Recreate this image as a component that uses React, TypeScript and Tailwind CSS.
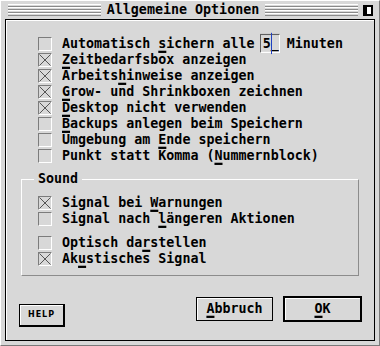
const font = { fontFamily: '"DejaVu Sans Mono", "Liberation Mono", monospace' };

const U = ({ children }: { children: string }) => (
  <span className="underline decoration-2 underline-offset-[2px]">{children}</span>
);

const Check = ({ on }: { on?: boolean }) => (
  <span className="w-[14px] h-[14px] shrink-0 border-t border-l border-[#7c7c7c] border-b border-r border-b-white border-r-white flex">
    {on && (
      <svg width="12" height="12" viewBox="0 0 12 12">
        <line x1="0.5" y1="0.5" x2="11.5" y2="11.5" stroke="#555" strokeWidth="1" />
        <line x1="11.5" y1="0.5" x2="0.5" y2="11.5" stroke="#555" strokeWidth="1" />
      </svg>
    )}
  </span>
);

const Row = ({ on, children }: { on?: boolean; children: React.ReactNode }) => (
  <div className="h-[16px] flex items-center gap-[10px]">
    <Check on={on} />
    <span className="whitespace-pre leading-[16px] inline-block scale-y-[1.12]">{children}</span>
  </div>
);

const Stripes = () => (
  <div className="flex-1 flex flex-col">
    {[0, 1, 2, 3].map((i) => (
      <div key={i} className="h-[3px] border-t border-white border-b border-b-[#8a8a8a]" />
    ))}
  </div>
);

export default function App() {
  return (
    <div
      className="w-[380px] h-[346px] bg-[#d8d8d8] border border-l-white border-t-white border-r-[#7a7a7a] border-b-[#7a7a7a] flex flex-col text-black font-bold text-[13.33px]"
      style={font}
    >
      {/* Title bar */}
      <div className="h-[18px] flex items-center pl-[7px] pr-[6px]">
        <Stripes />
        <span className="mx-[6px] leading-[16px] inline-block scale-y-[1.12]">Allgemeine Optionen</span>
        <Stripes />
        <svg className="ml-[5px]" width="10" height="11" viewBox="0 0 10 11">
          <rect x="0" y="0" width="10" height="11" fill="#000" />
          <rect x="4" y="2" width="4" height="7" fill="#fff" />
        </svg>
      </div>

      {/* Dialog body */}
      <div className="flex-1 mx-[4px] mb-[4px] border border-black shadow-[inset_1px_1px_0_#fff] flex flex-col">
        <div className="pl-[32px] pt-[16px]">
          <Row>
            Automatisch <U>s</U>ichern alle{' '}
            <span className="relative">
              5_
              <span className="absolute -left-[3px] -right-[1px] -top-[1px] -bottom-[1px] border border-t-[#606060] border-l-[#606060] border-r-white border-b-white" />
              <span className="absolute left-[8px] -top-[2px] -bottom-[2px] w-px bg-[#2040c0]" />
            </span>{' '}
            Minuten
          </Row>
          <Row on><U>Z</U>eitbedarfsbox anzeigen</Row>
          <Row on>Arbeits<U>h</U>inweise anzeigen</Row>
          <Row on><U>G</U>row- und Shrinkboxen zeichnen</Row>
          <Row on><U>D</U>esktop nicht verwenden</Row>
          <Row><U>B</U>ackups anlegen beim Speichern</Row>
          <Row>Umgebung am <U>E</U>nde speichern</Row>
          <Row>Punkt statt Komma (<U>N</U>ummernblock)</Row>
        </div>

        {/* Sound group */}
        <div className="relative mx-[15px] mt-[15px] h-[97px] border border-t-white border-l-white border-r-[#8c8c8c] border-b-[#8c8c8c] pl-[16px] pt-[15px]">
          <span className="absolute left-[12px] -top-[9px] px-[4px] bg-[#d8d8d8] leading-[16px]">
            <span className="inline-block scale-y-[1.12]">Sound</span>
          </span>
          <Row on>Signal bei <U>W</U>arnungen</Row>
          <Row>Signal nach <U>l</U>ängeren Aktionen</Row>
          <div className="h-[8px]" />
          <Row>Optisch da<U>r</U>stellen</Row>
          <Row on>Ak<U>u</U>stisches Signal</Row>
        </div>

        {/* Buttons */}
        <div className="flex items-start mt-[20px] pl-[13px] pr-[12px]">
          <button className="mt-[8px] w-[46px] h-[23px] border border-black border-r-2 border-b-2 shadow-[inset_1px_1px_0_#fff] flex items-center justify-center text-[8px] font-bold tracking-[1px]" style={{ fontFamily: '"DejaVu Sans", sans-serif' }}>
            HELP
          </button>
          <div className="flex-1" />
          <button className="mt-[1px] w-[77px] h-[24px] border border-black shadow-[inset_1px_1px_0_#fff] flex items-center justify-center leading-[16px]">
            <span className="inline-block scale-y-[1.12]"><U>A</U>bbruch</span>
          </button>
          <button className="ml-[10px] w-[79px] h-[26px] border-2 border-black shadow-[inset_1px_1px_0_#fff] flex items-center justify-center leading-[16px]">
            <span className="inline-block scale-y-[1.12]"><U>O</U>K</span>
          </button>
        </div>
      </div>
    </div>
  );
}
